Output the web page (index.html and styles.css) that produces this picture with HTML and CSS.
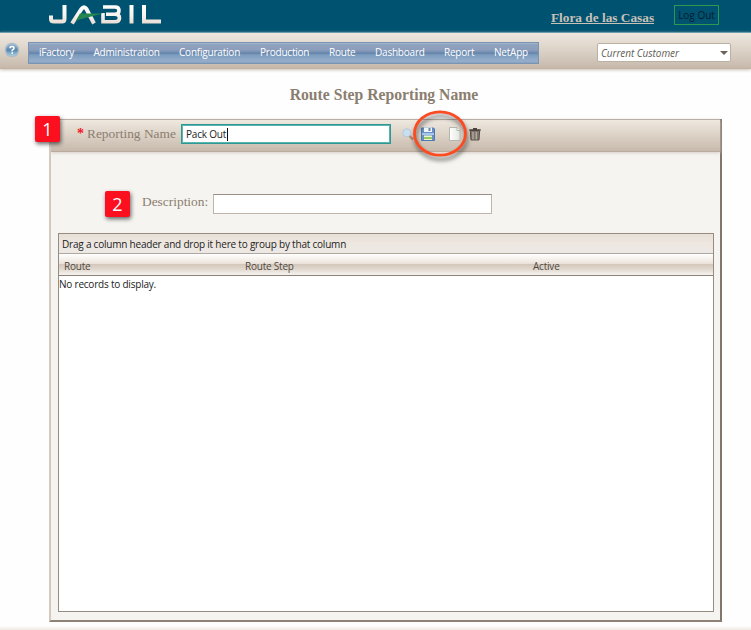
FILE: index.html
```
<!DOCTYPE html>
<html lang="en">
<head>
<meta charset="utf-8">
<title>Route Step Reporting Name</title>
<link rel="stylesheet" href="styles.css">
</head>
<body>
<header class="top">
  <svg class="logo" viewBox="0 0 112 20" width="112" height="20" aria-label="Jabil">
    <defs><linearGradient id="metal" x1="0" y1="0" x2="0" y2="20" gradientUnits="userSpaceOnUse"><stop offset="0" stop-color="#fff"/><stop offset=".5" stop-color="#f8f4f0"/><stop offset="1" stop-color="#e4d8ce"/></linearGradient></defs>
    <g fill="none" stroke="url(#metal)" stroke-width="4">
      <path d="M15.500 0V14Q15.500 16.500 13 16.500H5Q2 16.500 2 14V10.500"/>
      <path d="M23 18.500 32.500 4Q35 .5 37.500 4L45 18.500"/>
      <path d="M54 2H66Q70 2 70 5.500Q70 9.300 66 9.300H57M66 9.300Q70.500 9.300 70.500 13Q70.500 16.800 66 16.800H54V8" stroke-width="3.600"/>
      <path d="M82.500 0V18.500M95 0V16.500H112"/>
    </g>
    <path d="M31 8.500H54L46 10.500 27 15.500Z" fill="#24864f"/>
  </svg>
  <a class="user">Flora de las Casas</a>
  <button class="logout">Log Out</button>
</header>
<div class="bar">
  <svg class="help" viewBox="0 0 16 16" width="16" height="16"><defs><linearGradient id="orb" x2="0" y2="1"><stop stop-color="#9bb9d2"/><stop offset=".5" stop-color="#5685ac"/><stop offset="1" stop-color="#a3cfe6"/></linearGradient></defs><circle cx="8" cy="8" r="7.300" fill="#a9bdca"/><circle cx="8" cy="8" r="5.800" fill="url(#orb)"/><path d="M6 6.300Q6 4.600 8 4.600T10 6.300Q10 7.400 8.200 8.100V9.200" fill="none" stroke="#fff" stroke-width="1.500"/><circle cx="8.200" cy="11" r=".9" fill="#fff"/></svg>
  <nav class="menu"><a class="w1">iFactory</a><a class="w2">Administration</a><a class="w3">Configuration</a><a class="w4">Production</a><a class="w5">Route</a><a class="w6">Dashboard</a><a class="w7">Report</a><a class="w8">NetApp</a></nav>
  <div class="combo"><span>Current Customer</span><i class="arrow"></i></div>
</div>
<h1 class="title">Route Step Reporting Name</h1>
<main class="panel">
  <div class="toolbar">
    <span class="badge badge-one">1</span>
    <span class="required">*</span>
    <label class="name-label">Reporting Name</label>
    <div class="name-box">Pack Out<i class="caret"></i></div>
    <svg class="tool search" viewBox="0 0 13 14" width="13" height="14"><path d="m7 7.500 4 4" stroke="#b78667" stroke-width="2.400"/><circle cx="4.800" cy="4.800" r="4" fill="#c7dff1" stroke="#b5c9d9"/></svg>
    <svg class="tool save" viewBox="0 0 14 15" width="14" height="15"><path d="M.5 1H12.500L13.500 2V13.500H.5Z" fill="#6991c7" stroke="#4d79b0"/><path d="M3 .5H11V5H3Z" fill="#f1f6fa"/><path d="M7.500 1H9.500V4H7.500Z" fill="#6585ac"/><path d="M1 6H13V8H1Z" fill="#a5c5ea"/><path d="M3 8.500H11V13H3Z" fill="#edf5c9"/><path d="M3 10H11V12H3Z" fill="#93c969"/></svg>
    <svg class="tool page" viewBox="0 0 12 15" width="12" height="15"><defs><linearGradient id="sheet"><stop stop-color="#fff"/><stop offset="1" stop-color="#e2e6df"/></linearGradient></defs><path d="M.5 .5H8L11 3.500V13.500H.5Z" fill="url(#sheet)" stroke="#b5b7ae"/><path d="M8 .5V3.500H11" fill="#fff" stroke="#b5b7ae"/></svg>
    <svg class="tool trash" viewBox="0 0 12 13" width="12" height="13"><path d="M1.300 2.500H10.700L10 12H2Z" fill="#80766d" stroke="#5b5048"/><path d="M4 4V11.500M7.300 4V11.500" stroke="#b6aea7" stroke-width="1.300"/><path d="M.3 2H11.700M4 .6H8" stroke="#4b423b" stroke-width="1.300"/></svg>
    <svg class="ring" viewBox="0 0 60 56" width="60" height="56"><ellipse cx="29" cy="23.500" rx="25.500" ry="21.700" fill="none" stroke="#fa4b23" stroke-width="2.800"/></svg>
  </div>
  <div class="description">
    <span class="badge">2</span>
    <label class="desc-label">Description:</label>
    <div class="desc-box"></div>
  </div>
  <section class="grid">
    <div class="group">Drag a column header and drop it here to group by that column</div>
    <div class="columns"><span>Route</span><span>Route Step</span><span>Active</span></div>
    <div class="empty">No records to display.</div>
  </section>
</main>
<footer class="foot"></footer>
</body>
</html>
```
FILE: styles.css
```
* { box-sizing: border-box; }
body { margin: 0; height: 630px; overflow: hidden; display: flex; flex-direction: column; background: #fefefe; font: 10px/14px "Open Sans", "Noto Sans", sans-serif; letter-spacing: -.21px; color: #222; }
.top { height: 32px; flex: none; display: flex; background: #005271; }
.logo { margin: 5px 0 0 49px; }
.user { width: 105px; margin: 10px 0 0 390px; font: bold 13.3px/15px "Liberation Serif", serif; letter-spacing: 0; color: #c8c1b8; text-decoration: underline; white-space: nowrap; }
.logout { width: 45px; height: 20px; margin: 5px 0 0 18px; padding: 0; border: 1px solid #2c9a4e; background: transparent; font: 10px/18px "Open Sans", sans-serif; color: #001e2c; white-space: nowrap; }
.bar { height: 37px; flex: none; display: flex; border-top: 1px solid #6c9eac; background: linear-gradient(#eee8df, #dbd1c6 50%, #c7baad 96%, #bcaea1); box-shadow: 0 1px 3px #c9bfb4; }
.help { margin: 9px 0 0 4px; }
.menu { display: flex; width: 511px; height: 22px; margin: 9px 0 0 8px; padding-left: 10px; border: 1px solid #7995b3; background: linear-gradient(#a9bbcf 0, #8fa3be 8%, #8b9dbb 35%, #6484aa 52%, #7b9bbd 58%, #96aecb 90%, #86a0bd); color: #fff; line-height: 19px; white-space: nowrap; }
.w1 { width: 54.5px; } .w2 { width: 85.5px; } .w3 { width: 81px; } .w4 { width: 69px; }
.w5 { width: 46px; } .w6 { width: 69px; } .w7 { width: 50px; }
.combo { width: 134px; height: 19px; margin: 10px 0 0 58px; padding: 0 2px 0 3px; display: flex; align-items: center; justify-content: space-between; border: 1px solid #bdb1a4; border-radius: 2px; background: #fff; font-style: italic; letter-spacing: -.05px; color: #625c55; }
.arrow { border: 4px solid transparent; border-top-color: #6d6257; border-bottom: 0; }
.title { flex: none; height: 50px; margin: 0; padding: 16px 0 0 17px; text-align: center; font: bold 15.7px/20px "Liberation Serif", serif; letter-spacing: 0; color: #8b7e70; }
.panel { width: 673px; height: 503px; flex: none; margin-left: 49px; display: flex; flex-direction: column; background: #f5f4f0; border: 2px solid #d5c9be; border-right-color: #82776c; border-bottom-color: #8d8276; border-top: 0; }
.toolbar { position: relative; height: 33px; flex: none; display: flex; border-top: 1px solid #b9aea3; border-bottom: 1px solid #b9ab9e; background: linear-gradient(#eee8df, #dcd1c5 50%, #c7baad); box-shadow: 0 1px 3px #d7cec4; }
.badge { width: 25px; height: 26px; flex: none; border-radius: 2px; background: #fc1020; color: #fff; box-shadow: 1px 2px 4px rgba(0,0,0,.6); text-align: center; font: 18px/26px "Open Sans", sans-serif; letter-spacing: 0; }
.badge-one { position: absolute; left: -16px; top: -4px; }
.required { width: 10px; margin: 4px 0 0 26px; color: #f01825; font: bold 14px/20px "Liberation Serif", serif; }
.name-label, .desc-label { color: #8b7e70; font: 13.4px/20px "Liberation Serif", serif; letter-spacing: 0; white-space: nowrap; }
.name-label { width: 94px; margin-top: 4px; }
.name-box { width: 210px; height: 20px; margin-top: 4px; padding: 1px 4px; border: 1px solid #2c9997; box-shadow: inset 0 0 0 1px #5cb4ae; background: #fff; display: flex; line-height: 16px; }
.caret { width: 1px; height: 13px; margin: 2px 0 0 1px; background: #111; }
.search { margin: 8px 0 0 11px; } .save { margin: 7px 0 0 6px; } .page { margin: 7px 0 0 14px; } .trash { margin: 8px 0 0 8px; }
.ring { position: absolute; left: 360px; top: -10px; filter: drop-shadow(1px 4px 2px rgba(0,0,0,.55)); }
.description { height: 81px; flex: none; display: flex; padding: 39px 0 0 54px; }
.desc-label { width: 71px; margin: 1px 0 0 12px; }
.desc-box { width: 279px; height: 20px; margin-top: 3px; border: 1px solid #bfb5ab; border-top-color: #998e83; background: #fff; }
.grid { width: 656px; height: 379px; margin-left: 7px; border: 1px solid #968c82; background: #fff; }
.group { height: 20px; padding-left: 3px; line-height: 20px; border-bottom: 1px solid #b1a89e; background: linear-gradient(#e7e0d7, #eee7e0 50%, #ece8e5); }
.columns { display: grid; grid-template-columns: 181px 288px 1fr; height: 22px; padding-left: 5px; line-height: 24px; color: #504840; border-bottom: 1px solid #8c8278; background: linear-gradient(#fff, #ece4dc 45%, #d3c7bb 48%, #dfd6cc 70%, #f6f3ef); }
.empty { line-height: 17px; }
.foot { flex: 1; margin-top: 4px; background: linear-gradient(#fefefe, #eee9e0); }
```
